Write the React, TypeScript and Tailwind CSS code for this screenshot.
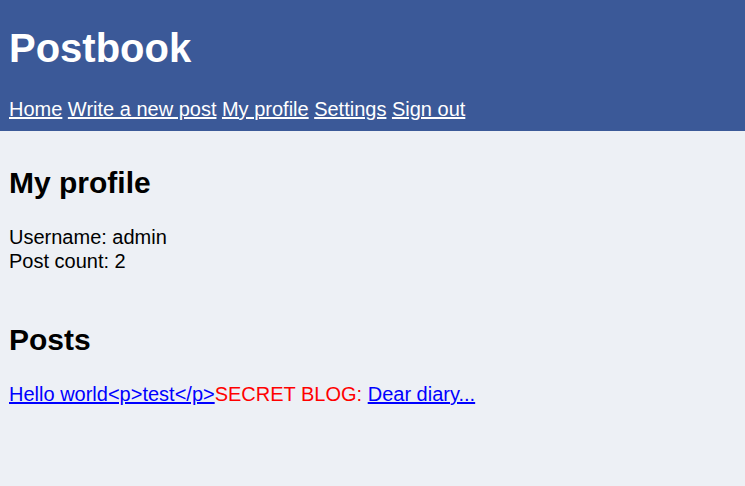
export default function App() {
  return (
    <div className="min-h-[486px] bg-[#edf0f5] text-black font-['Liberation_Sans',Arial,sans-serif] text-[20px] leading-[1.2]">
      <header className="bg-[#3b5998] px-[9px] pt-[24px] pb-[10px] text-white">
        <h1 className="text-[40px] font-bold leading-[1.2] mb-[25px]">Postbook</h1>
        <nav className="flex gap-[5.5px]">
          <a href="#" className="underline">Home</a>
          <a href="#" className="underline">Write a new post</a>
          <a href="#" className="underline">My profile</a>
          <a href="#" className="underline">Settings</a>
          <a href="#" className="underline">Sign out</a>
        </nav>
      </header>
      <main className="px-[9px]">
        <h2 className="text-[30px] font-bold leading-[1.2] pt-[34px] mb-[24px]">My profile</h2>
        <p>Username: admin</p>
        <p>Post count: 2</p>
        <h2 className="text-[30px] font-bold leading-[1.2] mt-[49px] mb-[24px]">Posts</h2>
        <p>
          <a href="#" className="underline text-[#0000ff]">Hello world&lt;p&gt;test&lt;/p&gt;</a>
          <span className="text-[#ff0000]">SECRET BLOG: </span>
          <a href="#" className="underline text-[#0000ff]">Dear diary...</a>
        </p>
      </main>
    </div>
  );
}
